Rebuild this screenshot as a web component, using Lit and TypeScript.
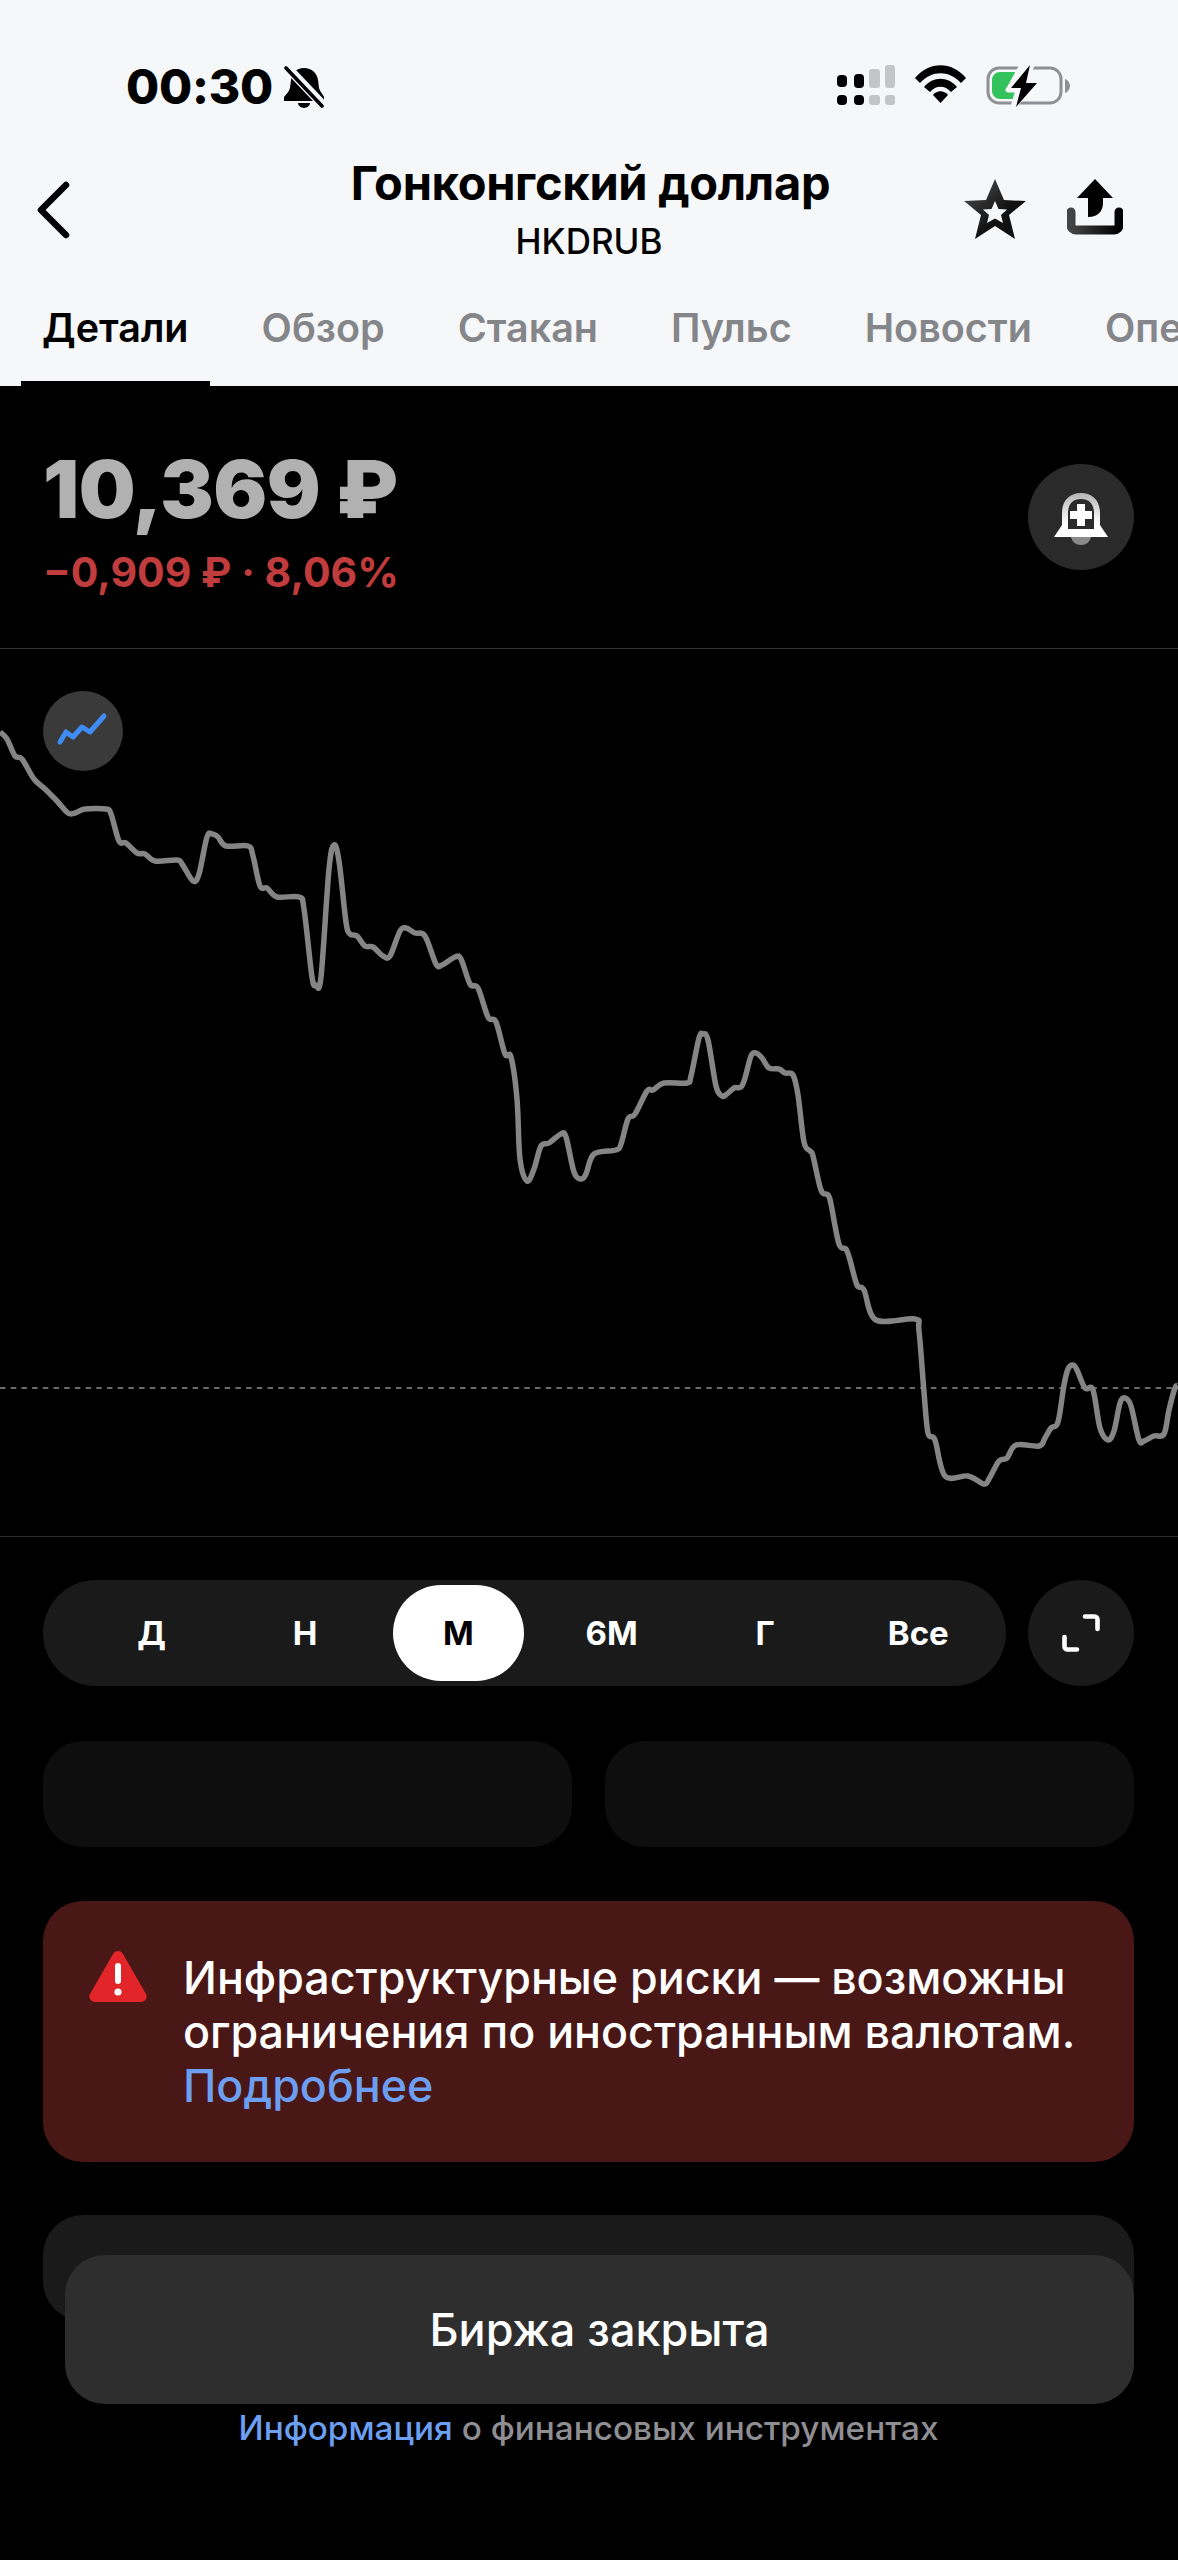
import { LitElement, html, css, svg } from "lit";
import { customElement } from "lit/decorators.js";

const POINTS: [number, number][] = [
  [0,733],[7,740],[15,757],[22,760],[34,780],[45,790],[57,802],[68,814],[75,814],[85,810],[106,810],[111,815],[119,842],[126,844],
  [137,854],[145,855],[155,862],[177,861],[182,865],[193,882],[199,875],[207,838],[212,835],[218,838],[226,847],[248,847],[253,857],
  [260,887],[267,889],[277,898],[299,898],[304,910],[312,978],[316,986],[321,978],[329,870],[334,846],[339,862],[346,923],[350,935],
  [357,937],[365,947],[373,948],[383,957],[390,957],[400,932],[406,929],[415,934],[425,937],[436,965],[442,966],[455,958],[461,960],
  [470,985],[478,989],[488,1018],[496,1023],[505,1055],[511,1058],[517,1100],[520,1160],[527,1182],[534,1170],[541,1147],[549,1144],
  [561,1135],[566,1138],[574,1173],[581,1180],[586,1175],[594,1155],[616,1151],[621,1145],[628,1120],[635,1115],[647,1092],[653,1091],
  [664,1084],[687,1084],[691,1077],[699,1039],[703,1035],[708,1041],[716,1087],[722,1097],[727,1095],[734,1089],[741,1088],[745,1079],
  [751,1057],[756,1054],[762,1059],[769,1069],[779,1070],[785,1074],[793,1076],[798,1096],[804,1143],[810,1152],[813,1157],[821,1191],
  [828,1196],[831,1205],[839,1245],[846,1250],[850,1261],[857,1286],[864,1291],[876,1321],[915,1320],[919,1332],[924,1393],[928,1434],
  [935,1441],[945,1477],[968,1477],[984,1485],[989,1480],[999,1462],[1007,1459],[1016,1446],[1039,1447],[1045,1439],[1051,1429],
  [1058,1423],[1064,1386],[1068,1370],[1073,1366],[1077,1371],[1085,1389],[1093,1391],[1100,1429],[1108,1441],[1114,1432],[1120,1404],
  [1125,1399],[1131,1407],[1139,1441],[1144,1442],[1154,1437],[1164,1435],[1169,1411],[1175,1389],[1178,1387],
];

// catmull-rom through the sampled points, the line in the app is a smooth spline
function smoothPath(pts: [number, number][]) {
  let d = `M${pts[0][0]} ${pts[0][1]}`;
  for (let i = 0; i < pts.length - 1; i++) {
    const p0 = pts[Math.max(i - 1, 0)];
    const p1 = pts[i];
    const p2 = pts[i + 1];
    const p3 = pts[Math.min(i + 2, pts.length - 1)];
    const c1x = p1[0] + (p2[0] - p0[0]) / 6;
    const c1y = p1[1] + (p2[1] - p0[1]) / 6;
    const c2x = p2[0] - (p3[0] - p1[0]) / 6;
    const c2y = p2[1] - (p3[1] - p1[1]) / 6;
    d += `C${c1x.toFixed(1)} ${c1y.toFixed(1)} ${c2x.toFixed(1)} ${c2y.toFixed(1)} ${p2[0]} ${p2[1]}`;
  }
  return d;
}

const TABS = ["Детали", "Обзор", "Стакан", "Пульс", "Новости", "Опе"];
const PERIODS = ["Д", "Н", "М", "6М", "Г", "Все"];

@customElement("app-root")
export class AppRoot extends LitElement {
  static styles = css`
    :host {
      display: block;
      position: relative;
      width: 1178px;
      height: 2560px;
      overflow: hidden;
      background: #000;
      font-family: Inter, "Noto Sans", sans-serif;
      color: #fff;
    }
    svg { display: block; }

    .top {
      height: 386px;
      background: #f6f7f9;
      color: #000;
      overflow: hidden;
    }
    .status {
      height: 110px;
      padding: 62px 108px 0 126px;
      box-sizing: border-box;
      display: flex;
      justify-content: space-between;
      align-items: flex-start;
    }
    .clock {
      display: flex;
      align-items: center;
      gap: 11px;
      font-size: 48px;
      line-height: 50px;
      font-weight: 800;
      letter-spacing: -0.2px;
    }
    .status-icons {
      display: flex;
      align-items: flex-start;
      gap: 20px;
      margin-top: 3px;
    }
    .nav {
      height: 156px;
      position: relative;
      display: flex;
      align-items: flex-start;
      justify-content: space-between;
      padding: 71px 55px 0 36px;
      box-sizing: border-box;
    }
    .titles {
      position: absolute;
      left: 0;
      right: 0;
      top: 46px;
      text-align: center;
    }
    .titles h1 {
      margin: 0;
      font-size: 47px;
      line-height: 54px;
      font-weight: 700;
      letter-spacing: -0.3px;
      padding-left: 3px;
    }
    .titles p {
      margin: 11px 0 0;
      font-size: 35px;
      line-height: 40px;
      font-weight: 500;
    }
    .actions {
      display: flex;
      align-items: flex-start;
      gap: 41px;
      margin-top: -2px;
    }
    .tabs {
      display: flex;
      gap: 73px;
      padding: 0 0 0 42px;
      white-space: nowrap;
      height: 120px;
      box-sizing: border-box;
      position: relative;
    }
    .tab {
      font-size: 39.5px;
      line-height: 46px;
      font-weight: 600;
      color: #84868a;
      padding-top: 39px;
      position: relative;
    }
    .tab.on { color: #000; }
    .tab.on::after {
      content: "";
      position: absolute;
      left: -21px;
      right: -21px;
      top: 115px;
      height: 5px;
      background: #000;
    }

    .quote {
      height: 263px;
      box-sizing: border-box;
      padding: 58px 44px 0 43px;
      display: flex;
      justify-content: space-between;
      align-items: flex-start;
      border-bottom: 1px solid #333;
    }
    .price {
      font-size: 80px;
      line-height: 90px;
      font-weight: 900;
      color: #b1b1b1;
      letter-spacing: -0.5px;
    }
    .delta {
      margin-top: 15px;
      font-size: 41px;
      line-height: 46px;
      font-weight: 700;
      color: #c13c3c;
    }
    .round {
      width: 106px;
      height: 106px;
      border-radius: 50%;
      background: #2a2a2a;
      display: flex;
      align-items: center;
      justify-content: center;
      flex: none;
    }
    .quote .round { margin-top: 20px; }
    .quote .round svg { margin-top: 4px; }

    .chart {
      position: relative;
      height: 887px;
      border-bottom: 1px solid #2c2c2c;
    }
    .chart-type {
      position: absolute;
      left: 43px;
      top: 42px;
      width: 80px;
      height: 80px;
      border-radius: 50%;
      background: #3a3a3a;
      display: flex;
      align-items: center;
      justify-content: center;
    }

    .periods-row {
      display: flex;
      gap: 22px;
      margin: 43px 44px 0 43px;
    }
    .periods {
      flex: 1;
      height: 106px;
      border-radius: 53px;
      background: #1a1a1a;
      display: grid;
      grid-template-columns: repeat(6, 1fr);
      align-items: center;
      padding: 0 11px 0 32px;
      box-sizing: border-box;
    }
    .period {
      height: 96px;
      margin: 0 11px;
      border-radius: 48px;
      display: flex;
      align-items: center;
      justify-content: center;
      font-size: 33px;
      font-weight: 700;
    }
    .period.on { background: #fff; color: #000; }
    .periods-row .round { background: #1a1a1a; }

    .stats {
      display: flex;
      gap: 33px;
      margin: 55px 44px 0 43px;
    }
    .stat {
      flex: 1;
      height: 106px;
      border-radius: 40px;
      background: #0e0e0e;
    }

    .alert {
      margin: 54px 44px 0 43px;
      height: 261px;
      box-sizing: border-box;
      border-radius: 40px;
      background: #4a1717;
      display: flex;
      gap: 36px;
      padding: 50px 20px 0 46px;
      font-size: 44.8px;
      line-height: 54px;
      font-weight: 500;
      white-space: nowrap;
    }
    .alert svg { flex: none; margin-top: -1px; }
    .alert a { color: #6c9ff2; display: block; }

    .placeholder {
      margin: 53px 44px 0 43px;
      height: 106px;
      border-radius: 40px;
      background: #1a1a1a;
    }

    .dock {
      position: absolute;
      left: 65px;
      right: 44px;
      top: 2255px;
    }
    .dock-btn {
      height: 149px;
      border-radius: 40px;
      background: #2e2e2e;
      display: flex;
      align-items: center;
      justify-content: center;
      font-size: 45px;
      font-weight: 500;
    }
    .dock-note {
      margin: 4px 0 0 -22px;
      text-align: center;
      font-size: 33.3px;
      line-height: 40px;
      font-weight: 500;
      color: #8e8e93;
    }
    .dock-note a { color: #6c9ff2; }
  `;

  private signalIcon() {
    return svg`<svg width="58" height="40" viewBox="0 0 58 40">
      <rect x="0" y="10" width="10" height="12" rx="4" fill="#000"/>
      <rect x="17" y="9" width="10" height="14" rx="4" fill="#000"/>
      <rect x="32" y="4" width="11" height="19" rx="3" fill="#c4c5c7"/>
      <rect x="48" y="0" width="10" height="23" rx="3" fill="#c4c5c7"/>
      <rect x="0" y="30" width="10" height="10" rx="4" fill="#000"/>
      <rect x="17" y="30" width="10" height="10" rx="4" fill="#000"/>
      <rect x="32" y="30" width="11" height="10" rx="3" fill="#c4c5c7"/>
      <rect x="48" y="30" width="10" height="10" rx="3" fill="#c4c5c7"/>
    </svg>`;
  }

  private wifiIcon() {
    return svg`<svg width="51" height="38" viewBox="0 0 51 38">
      <path d="M0 13C14 -4 37 -4 51 13L46 18C34 5 17 5 5 18Z" fill="#000"/>
      <path d="M9 22C18 11 33 11 42 22L36 27C30 20 21 20 15 27Z" fill="#000"/>
      <path d="M18 30C22 25 29 25 33 30L25.5 38Z" fill="#000"/>
    </svg>`;
  }

  private batteryIcon() {
    return svg`<svg width="84" height="42" viewBox="0 0 84 42">
      <rect x="2" y="3" width="73" height="35" rx="11" fill="none" stroke="#8e9093" stroke-width="3"/>
      <path d="M6 15a8 8 0 0 1 8-8H39L26 24H34L30 34H14a8 8 0 0 1-8-8Z" fill="#33c25c"/>
      <path d="M46 0H36L24 22L22 25H32L27 42L51 17H40Z" fill="#f6f7f9" stroke="#f6f7f9" stroke-width="5" stroke-linejoin="round"/>
      <path d="M44 0L25 23H35L30 42L51 18H40Z" fill="#000"/>
      <path d="M79 14c3 1 5 4 5 7s-2 6-5 7Z" fill="#8e9093"/>
    </svg>`;
  }

  private muteIcon() {
    return svg`<svg width="40" height="42" viewBox="0 0 40 42">
      <path d="M20 2c8 0 13 5 14 12l1 8c1 4 4 6 5 9v4H0V31c2-3 5-5 6-9l1-8C8 7 12 2 20 2Z" fill="#000"/>
      <path d="M14 37h12a6 5 0 0 1-12 0Z" fill="#000"/>
      <path d="M1 -1L39 39" stroke="#f6f7f9" stroke-width="9"/>
      <path d="M2 2L38 40" stroke="#000" stroke-width="3.6" stroke-linecap="round"/>
    </svg>`;
  }

  private starIcon() {
    return svg`<svg width="62" height="60" viewBox="0 0 62 60">
      <defs><linearGradient id="sg" x1="0" y1="0" x2="1" y2="1"><stop offset="0" stop-color="#555"/><stop offset="0.6" stop-color="#111"/></linearGradient></defs>
      <path fill-rule="evenodd" fill="url(#sg)" d="M31 0L40 21L62 22L45 36L51 60L31 47L11 60L17 36L0 22L22 21ZM31 22L27.5 30L19 30.5L25 36L23 44L31 39.5L39 44L37 36L43 30.5L34.5 30Z"/>
    </svg>`;
  }

  private shareIcon() {
    return svg`<svg width="56" height="56" viewBox="0 0 56 56">
      <defs><linearGradient id="bg" x1="0" y1="0" x2="1" y2="0"><stop offset="0" stop-color="#444"/><stop offset="1" stop-color="#000"/></linearGradient></defs>
      <path d="M28 0L46 19H36V24C36 32 31 38 21 38V19H10Z" fill="#000"/>
      <path d="M4 33V46a5 5 0 0 0 5 5H47a5 5 0 0 0 5-5V33" fill="none" stroke="url(#bg)" stroke-width="9" stroke-linecap="round"/>
    </svg>`;
  }

  private bellPlusIcon() {
    return svg`<svg width="54" height="52" viewBox="0 0 54 52">
      <defs><linearGradient id="bp" x1="0" y1="0" x2="0" y2="1"><stop offset="0" stop-color="#b4b4b4"/><stop offset="0.7" stop-color="#fff"/></linearGradient></defs>
      <path fill-rule="evenodd" fill="url(#bp)" d="M27 0C39 0 46 8 46 20V32L54 44H0L8 32V20C8 8 15 0 27 0ZM27 6C18 6 14 12 14 20V36H40V20C40 12 36 6 27 6Z"/>
      <path d="M23 11H31V18H38V26H31V33H23V26H16V18H23Z" fill="#fff"/>
      <path d="M17 44H37C36 49 32 52 27 52C22 52 18 49 17 44Z" fill="#8a8a8a"/>
    </svg>`;
  }

  private chartIcon() {
    return svg`<svg width="80" height="80" viewBox="43 692 80 80">
      <path d="M60 743L66 733L73 738L82 728L90 733L104 717" fill="none" stroke="#3f8cf4" stroke-width="5" stroke-linecap="round" stroke-linejoin="round"/>
    </svg>`;
  }

  private expandIcon() {
    return svg`<svg width="38" height="38" viewBox="0 0 38 38">
      <path d="M23 2.5H32.5a3 3 0 0 1 3 3V15M2.5 23V32.5a3 3 0 0 0 3 3H15" fill="none" stroke="#fff" stroke-width="4.6" stroke-linecap="round"/>
    </svg>`;
  }

  private warnIcon() {
    return svg`<svg width="58" height="52" viewBox="0 0 58 52">
      <path d="M24 4C26 0 32 0 34 4L57 44C59 48 56 52 52 52H6C2 52 -1 48 1 44Z" fill="#e12528"/>
      <rect x="26" y="13" width="6" height="21" rx="3" fill="#fff"/>
      <circle cx="29" cy="42" r="3.6" fill="#fff"/>
    </svg>`;
  }

  render() {
    return html`
      <section class="top">
        <div class="status">
          <div class="clock">00:30 ${this.muteIcon()}</div>
          <div class="status-icons">
            ${this.signalIcon()} ${this.wifiIcon()} ${this.batteryIcon()}
          </div>
        </div>
        <div class="nav">
          <svg width="34" height="58" viewBox="0 0 34 58">
            <path d="M30 4L5 29L30 54" fill="none" stroke="#000" stroke-width="6.5" stroke-linecap="round" stroke-linejoin="round"/>
          </svg>
          <div class="titles">
            <h1>Гонконгский доллар</h1>
            <p>HKDRUB</p>
          </div>
          <div class="actions">${this.starIcon()} ${this.shareIcon()}</div>
        </div>
        <div class="tabs">
          ${TABS.map((t, i) => html`<div class="tab ${i === 0 ? "on" : ""}">${t}</div>`)}
        </div>
      </section>

      <section class="quote">
        <div>
          <div class="price">10,369 ₽</div>
          <div class="delta">−0,909 ₽ · 8,06%</div>
        </div>
        <div class="round">${this.bellPlusIcon()}</div>
      </section>

      <section class="chart">
        <svg width="1178" height="887" viewBox="0 650 1178 887">
          <line x1="0" y1="1389" x2="1178" y2="1389" stroke="#6a6a6a" stroke-width="2" stroke-dasharray="5.5 5.2"/>
          <path d=${smoothPath(POINTS)} fill="none" stroke="#858585" stroke-width="5.5" stroke-linejoin="round"/>
        </svg>
        <div class="chart-type">${this.chartIcon()}</div>
      </section>

      <div class="periods-row">
        <div class="periods">
          ${PERIODS.map((p) => html`<div class="period ${p === "М" ? "on" : ""}">${p}</div>`)}
        </div>
        <div class="round">${this.expandIcon()}</div>
      </div>

      <div class="stats">
        <div class="stat"></div>
        <div class="stat"></div>
      </div>

      <div class="alert">
        ${this.warnIcon()}
        <div>
          Инфраструктурные риски — возможны<br />
          ограничения по иностранным валютам.
          <a>Подробнее</a>
        </div>
      </div>

      <div class="placeholder"></div>

      <div class="dock">
        <div class="dock-btn">Биржа закрыта</div>
        <div class="dock-note"><a>Информация</a> о финансовых инструментах</div>
      </div>
    `;
  }
}
